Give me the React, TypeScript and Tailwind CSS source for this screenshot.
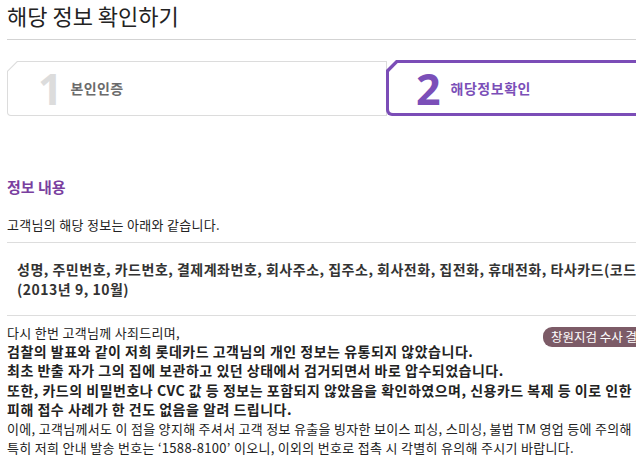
import React from 'react'

const StepTab = ({
  num,
  label,
  active,
}: {
  num: string
  label: string
  active?: boolean
}) => {
  // outer layer = border colour, inner layer = white face; both chamfered top-left
  return (
    <div
      className={
        active
          ? 'relative z-10 -ml-px w-[380px] h-[56px] -mt-px bg-[#7b4db7] p-[3px] rounded-bl-[6px] [clip-path:polygon(10px_0,100%_0,100%_100%,0_100%,0_10px)]'
          : 'w-[380px] h-[55px] bg-[#dcdcdc] p-px rounded-bl-[4px] [clip-path:polygon(10px_0,100%_0,100%_100%,0_100%,0_10px)]'
      }
    >
      <div
        className={
          active
            ? 'h-full bg-white rounded-bl-[4px] flex items-center pl-[27px] [clip-path:polygon(8.7px_0,100%_0,100%_100%,0_100%,0_8.7px)]'
            : 'h-full bg-white rounded-bl-[3px] flex items-center pl-[30px] [clip-path:polygon(9.6px_0,100%_0,100%_100%,0_100%,0_9.6px)]'
        }
      >
        <span
          className={
            'font-["Noto_Sans",sans-serif] font-bold text-[43px] leading-none ' +
            (active ? 'text-[#7b4fb8]' : 'text-[#dcdcdc]')
          }
        >
          {num}
        </span>
        <span
          className={
            'text-[14px] font-bold ' +
            (active ? 'ml-[10px] tracking-[0.5px] text-[#7b4fb8]' : 'ml-[8px] tracking-[0.3px] text-[#6b6b6b]')
          }
        >
          {label}
        </span>
      </div>
    </div>
  )
}

export default function App() {
  return (
    <div className="w-[636px] h-[456px] overflow-hidden bg-white font-['Noto_Sans_CJK_KR',sans-serif] text-[#222]">
      <div className="w-[780px] pl-[7px]">
        <h1 className="text-[22px] leading-[30px] font-normal text-[#222]">
          해당 정보 확인하기
        </h1>
        <div className="mt-[9px] h-px bg-[#d3d3d3]" />

        <div className="mt-[21px] flex">
          <StepTab num="1" label="본인인증" />
          <StepTab num="2" label="해당정보확인" active />
        </div>

        <h2 className="mt-[61px] text-[15px] leading-[20px] font-bold text-[#7a3f9f]">
          정보 내용
        </h2>
        <p className="mt-[19px] text-[13px] leading-[18px] tracking-[0.3px]">
          고객님의 해당 정보는 아래와 같습니다.
        </p>
        <div className="mt-[8px] h-px bg-[#dddddd]" />

        <p className="mt-[17px] pl-[10px] text-[14px] leading-[19.5px] font-bold tracking-[0.5px] text-[#333] whitespace-nowrap">
          성명, 주민번호, 카드번호, 결제계좌번호, 회사주소, 집주소, 회사전화, 집전화, 휴대전화, 타사카드(코드번호)
          <br />
          (2013년 9, 10월)
        </p>
        <div className="mt-[16px] h-px bg-[#dddddd]" />

        <div className="relative mt-[7px] text-[13px] leading-[19.2px] tracking-[0.3px] whitespace-nowrap">
          <span className="absolute left-[536px] top-[4px] h-[20px] pl-[8px] pr-[10px] rounded-l-[9px] bg-[#7c5b67] text-white text-[12.5px] leading-[20px] tracking-normal">
            창원지검 수사 결과 보기
          </span>
          <p>다시 한번 고객님께 사죄드리며,</p>
          <div className="font-bold text-[14px] tracking-[0.5px]">
            <p>검찰의 발표와 같이 저희 롯데카드 고객님의 개인 정보는 유통되지 않았습니다.</p>
            <p>최초 반출 자가 그의 집에 보관하고 있던 상태에서 검거되면서 바로 압수되었습니다.</p>
            <p>
              또한, 카드의 비밀번호나 CVC 값 등 정보는 포함되지 않았음을 확인하였으며, 신용카드 복제 등 이로 인한
            </p>
            <p>피해 접수 사례가 한 건도 없음을 알려 드립니다.</p>
          </div>
          <p>
            이에, 고객님께서도 이 점을 양지해 주셔서 고객 정보 유출을 빙자한 보이스 피싱, 스미싱, 불법 TM 영업 등에 주의해
          </p>
          <p>특히 저희 안내 발송 번호는 ‘1588-8100’ 이오니, 이외의 번호로 접촉 시 각별히 유의해 주시기 바랍니다.</p>
        </div>
      </div>
    </div>
  )
}
